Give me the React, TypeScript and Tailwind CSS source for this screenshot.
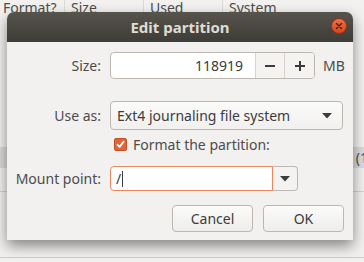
import React from "react";

const font = { fontFamily: '"Noto Sans", "Open Sans", sans-serif' };

export default function App() {
  return (
    <div className="relative w-[364px] h-[262px] overflow-hidden bg-[#f2f1f0] text-[#3c3c3c]" style={font}>
      {/* background table header */}
      <div className="flex h-[14px] text-[14px] leading-[20px] text-[#4c4c4c]">
        <div className="w-[65px] pl-[3px] border-r border-[#dcdad5] -mt-[2px]">Format?</div>
        <div className="w-[79px] pl-[6px] border-r border-[#dcdad5] -mt-[2px]">Size</div>
        <div className="w-[79px] pl-[6px] border-r border-[#dcdad5] -mt-[2px]">Used</div>
        <div className="flex-1 pl-[6px] -mt-[2px]">System</div>
      </div>
      <div className="mt-[133px] h-[21px] bg-[#dcdbd9] flex justify-end items-center text-[14px] text-[#4c4c4c]">
        <span className="-mr-[4px]">(1</span>
      </div>
      <div className="mt-[23px] h-px bg-[#d4d2cf]" />
      <div className="mt-[65px] h-px bg-[#cfcdca]" />

      {/* dialog */}
      <div className="absolute left-[7px] top-[12px] w-[346px] h-[228px] flex flex-col rounded-t-[7px] shadow-[0_6px_14px_rgba(0,0,0,0.45)] bg-[#f2f1f0]">
        <div className="relative h-[30px] rounded-t-[7px] bg-gradient-to-b from-[#57544d] to-[#3e3c37] flex items-center justify-center">
          <span className="text-[15px] font-bold text-[#dfdbd2]">Edit partition</span>
          <div className="absolute right-[6px] top-[6px] w-[16px] h-[16px] rounded-full bg-gradient-to-b from-[#f0703f] to-[#d7461a] border border-[#9c3414] flex items-center justify-center">
            <svg width="8" height="8" viewBox="0 0 8 8">
              <path d="M1.5 1.5 L6.5 6.5 M6.5 1.5 L1.5 6.5" stroke="#4a2010" strokeWidth="1.4" strokeLinecap="round" />
            </svg>
          </div>
        </div>
        <div className="flex flex-col text-[14px] text-[#4c4c4c]">
          {/* size row */}
          <div className="flex items-center mt-[10px] h-[27px]">
            <div className="w-[94px] text-right">Size:</div>
            <div className="ml-[9px] w-[205px] h-[27px] flex rounded-[4px] border border-[#bcb8b1] bg-white overflow-hidden">
              <div className="flex-1 flex items-center justify-end pr-[12px] text-[#3c3c3c]">118919</div>
              <div className="w-[29px] border-l border-[#d6d3ce] bg-[#f4f3f2] flex items-center justify-center">
                <div className="w-[10px] h-[2px] bg-[#3c3c3c]" />
              </div>
              <div className="w-[30px] border-l border-[#d6d3ce] bg-[#f4f3f2] flex items-center justify-center relative">
                <div className="w-[10px] h-[2px] bg-[#3c3c3c]" />
                <div className="absolute w-[2px] h-[10px] bg-[#3c3c3c]" />
              </div>
            </div>
            <div className="ml-[8px]">MB</div>
          </div>
          {/* use as */}
          <div className="flex items-center mt-[22px] h-[29px]">
            <div className="w-[94px] text-right">Use as:</div>
            <div className="ml-[9px] w-[233px] h-[29px] flex items-center justify-between rounded-[4px] border border-[#bcb8b1] bg-gradient-to-b from-[#fbfbfa] to-[#f1f0ee] pl-[6px] pr-[10px] text-[#3c3c3c]">
              <span>Ext4 journaling file system</span>
              <svg width="10" height="6" viewBox="0 0 10 6"><path d="M0 0 L10 0 L5 5.5 Z" fill="#3c3c3c" /></svg>
            </div>
          </div>
          {/* checkbox */}
          <div className="flex items-center mt-[7px] h-[15px] ml-[107px]">
            <div className="w-[13px] h-[13px] rounded-[2px] bg-[#e0643a] border border-[#c44f26] flex items-center justify-center">
              <svg width="9" height="9" viewBox="0 0 9 9"><path d="M1.5 4.8 L3.6 6.9 L7.6 1.8" stroke="white" strokeWidth="1.8" fill="none" strokeLinecap="round" strokeLinejoin="round" /></svg>
            </div>
            <span className="ml-[6px]">Format the partition:</span>
          </div>
          {/* mount point */}
          <div className="flex items-center mt-[14px] h-[25px]">
            <div className="w-[94px] text-right">Mount point:</div>
            <div className="ml-[9px] w-[188px] h-[25px] flex">
              <div className="w-[163px] h-full bg-white border border-[#e9875d] rounded-l-[4px] flex items-center pl-[5px] text-[#3c3c3c]">
                <span>/</span>
                <span className="w-px h-[16px] bg-[#3c3c3c] ml-[1px]" />
              </div>
              <div className="flex-1 flex items-center justify-center bg-[#f4f3f2] border border-l-0 border-[#bcb8b1] rounded-r-[4px]">
                <svg width="10" height="6" viewBox="0 0 10 6"><path d="M0 0 L10 0 L5 5.5 Z" fill="#3c3c3c" /></svg>
              </div>
            </div>
          </div>
          {/* buttons */}
          <div className="flex justify-end gap-[10px] mt-[14px] pr-[9px]">
            <div className="w-[81px] h-[27px] rounded-[4px] border border-[#bcb8b1] bg-gradient-to-b from-[#fbfbfa] to-[#eeedeb] flex items-center justify-center text-[#3c3c3c]">Cancel</div>
            <div className="w-[81px] h-[27px] rounded-[4px] border border-[#bcb8b1] bg-gradient-to-b from-[#fbfbfa] to-[#eeedeb] flex items-center justify-center text-[#3c3c3c]">OK</div>
          </div>
        </div>
      </div>
    </div>
  );
}
